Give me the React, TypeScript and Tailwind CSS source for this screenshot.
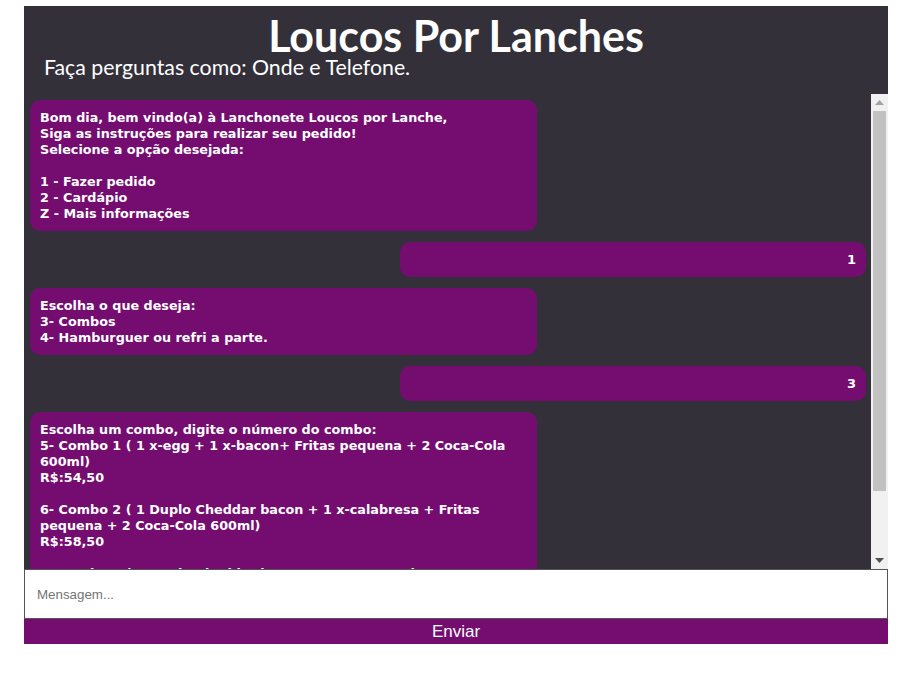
import React from "react";

const head = { fontFamily: '"Comic Sans MS", Lato, "DejaVu Sans", sans-serif' };
const body = { fontFamily: '"Comic Sans MS", "DejaVu Sans", Lato, sans-serif' };
const arial = { fontFamily: '"Liberation Sans", Arial, sans-serif' };

const bot1 = `Bom dia, bem vindo(a) à Lanchonete Loucos por Lanche,
Siga as instruções para realizar seu pedido!
Selecione a opção desejada:

1 - Fazer pedido
2 - Cardápio
Z - Mais informações`;

const bot2 = `Escolha o que deseja:
3- Combos
4- Hamburguer ou refri a parte.`;

const bot3 = `Escolha um combo, digite o número do combo:
5- Combo 1 ( 1 x-egg + 1 x-bacon+ Fritas pequena + 2 Coca-Cola
600ml)
R$:54,50

6- Combo 2 ( 1 Duplo Cheddar bacon + 1 x-calabresa + Fritas
pequena + 2 Coca-Cola 600ml)
R$:58,50

7- Combo 3 ( 1 Duplo Cheddar bacon + 1 x-egg + Fritas
pequena + 2 Coca-Cola 600ml)
R$:60,00`;

function Bot({ text }: { text: string }) {
  return (
    <div
      className="w-[507px] shrink-0 rounded-[10px] bg-[#750c6f] px-[10px] pt-[10px] pb-[9px] text-[12.75px] font-bold leading-[16px] text-white whitespace-pre"
      style={body}
    >
      {text}
    </div>
  );
}

function User({ text }: { text: string }) {
  return (
    <div
      className="ml-auto w-[466px] shrink-0 rounded-[10px] bg-[#750c6f] px-[10px] pt-[10px] pb-[9px] text-right text-[13px] font-bold leading-[16px] text-white"
      style={body}
    >
      {text}
    </div>
  );
}

function ScrollBar() {
  return (
    <div className="flex w-[17px] shrink-0 flex-col bg-[#f1f1f1]">
      <div className="flex h-[17px] items-center justify-center">
        <svg width="9" height="5" viewBox="0 0 9 5">
          <polygon points="0,5 9,5 4.5,0" fill="#a3a3a3" />
        </svg>
      </div>
      <div className="flex flex-1 flex-col px-[2px]">
        <div className="h-[380px] bg-[#c1c1c1]" />
      </div>
      <div className="flex h-[17px] items-center justify-center">
        <svg width="9" height="5" viewBox="0 0 9 5">
          <polygon points="0,0 9,0 4.5,5" fill="#505050" />
        </svg>
      </div>
    </div>
  );
}

export default function App() {
  return (
    <div className="min-h-[683px] bg-white pt-[6px]">
      <div className="mx-auto flex w-[864px] flex-col">
        <div className="flex h-[88px] flex-col bg-[#33303a] text-white" style={head}>
          <h1 className="pt-[10px] text-center text-[43px] font-bold leading-[40px]">Loucos Por Lanches</h1>
          <p className="pl-[20px] text-[21.3px] leading-[22px]">Faça perguntas como: Onde e Telefone.</p>
        </div>
        <div className="flex h-[475px] bg-[#33303a]">
          <div className="flex flex-1 flex-col gap-[11px] overflow-hidden pb-[6px] pl-[6px] pr-[5px] pt-[6px]">
            <Bot text={bot1} />
            <User text="1" />
            <Bot text={bot2} />
            <User text="3" />
            <Bot text={bot3} />
          </div>
          <ScrollBar />
        </div>
        <input
          className="h-[50px] w-full border border-[#555] bg-white px-[12px] text-[13.33px] text-black outline-none placeholder:text-[#757575]"
          style={arial}
          placeholder="Mensagem..."
        />
        <button className="h-[25px] w-full bg-[#750c6f] text-[17px] leading-[25px] text-white" style={arial}>
          Enviar
        </button>
      </div>
    </div>
  );
}
